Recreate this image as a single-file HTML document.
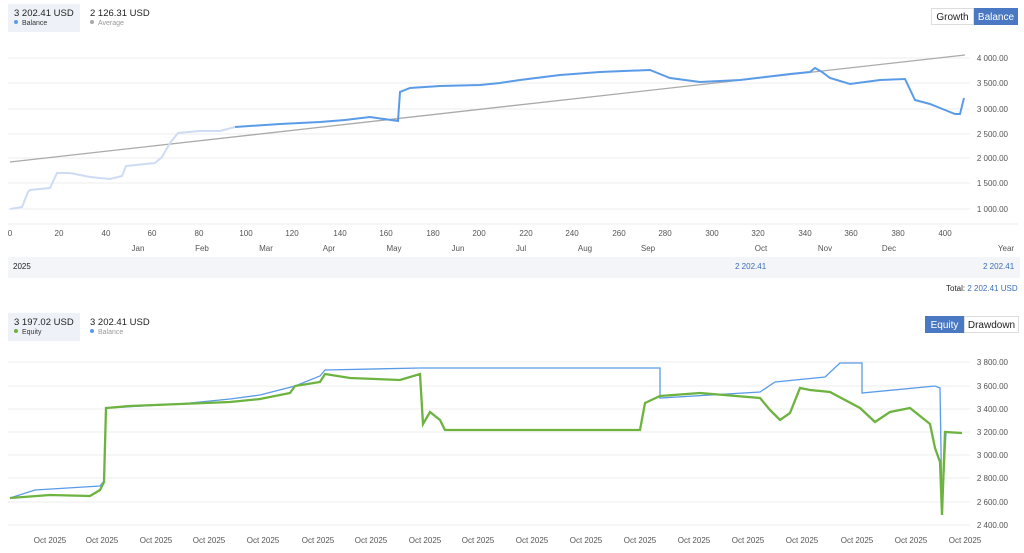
<!DOCTYPE html>
<html><head><meta charset="utf-8"><style>
body{margin:0;width:1024px;height:553px;background:#fff;font-family:"Liberation Sans","DejaVu Sans",sans-serif;position:relative;overflow:hidden;color:#333}
.a{position:absolute}
.leg{font-size:9.5px;color:#222}
.sub{font-size:7px;color:#999;margin-top:1px}
.dot{display:inline-block;width:4px;height:4px;border-radius:2px;margin-right:4px;vertical-align:1px}
.btn{position:absolute;font-size:10px;border:1px solid #ddd;height:17px;line-height:17px;text-align:center;box-sizing:border-box}
.on{background:#4a78c2;color:#fff;border-color:#4a78c2}
svg text{font-family:"Liberation Sans","DejaVu Sans",sans-serif;font-size:8px;fill:#555}
</style></head><body>
<div class="a" style="left:8px;top:4px;width:72px;height:28px;background:#eef2f8"></div>
<div class="a leg" style="left:14px;top:8px">3 202.41 USD<div class="sub" style="color:#333"><span class="dot" style="background:#5a9be8"></span>Balance</div></div>
<div class="a leg" style="left:90px;top:8px">2 126.31 USD<div class="sub"><span class="dot" style="background:#aaa"></span>Average</div></div>
<div class="btn" style="left:931px;top:8px;width:43px;color:#222">Growth</div>
<div class="btn on" style="left:974px;top:8px;width:44px">Balance</div>

<div class="a" style="left:8px;top:257px;width:1012px;height:21px;background:#f3f5f9"></div>
<div class="a" style="left:13px;top:262px;font-size:8px;color:#222">2025</div>
<div class="a" style="left:735px;top:262px;font-size:8px;color:#3b6fb8">2 202.41</div>
<div class="a" style="left:983px;top:262px;font-size:8px;color:#3b6fb8">2 202.41</div>
<div class="a" style="left:946px;top:284px;font-size:8px;color:#222">Total: <span style="color:#3b6fb8">2 202.41 USD</span></div>

<div class="a" style="left:8px;top:313px;width:72px;height:28px;background:#eef2f8"></div>
<div class="a leg" style="left:14px;top:317px">3 197.02 USD<div class="sub" style="color:#333"><span class="dot" style="background:#6db33f"></span>Equity</div></div>
<div class="a leg" style="left:90px;top:317px">3 202.41 USD<div class="sub"><span class="dot" style="background:#5a9be8"></span>Balance</div></div>
<div class="btn on" style="left:925px;top:316px;width:39px">Equity</div>
<div class="btn" style="left:964px;top:316px;width:55px;color:#222">Drawdown</div>

<svg class="a" style="left:0;top:0" width="1024" height="553">
<g stroke="#eee" stroke-width="1">
<line x1="8" x2="970" y1="58" y2="58"/><line x1="8" x2="970" y1="83" y2="83"/><line x1="8" x2="970" y1="109" y2="109"/><line x1="8" x2="970" y1="134" y2="134"/><line x1="8" x2="970" y1="158" y2="158"/><line x1="8" x2="970" y1="183" y2="183"/><line x1="8" x2="970" y1="209" y2="209"/><line x1="8" x2="1018" y1="224" y2="224"/>
<line x1="8" x2="970" y1="362" y2="362"/><line x1="8" x2="970" y1="386" y2="386"/><line x1="8" x2="970" y1="409" y2="409"/><line x1="8" x2="970" y1="432" y2="432"/><line x1="8" x2="970" y1="455" y2="455"/><line x1="8" x2="970" y1="478" y2="478"/><line x1="8" x2="970" y1="502" y2="502"/><line x1="8" x2="970" y1="525" y2="525"/>
</g>
<g text-anchor="end">
<text x="1008" y="61">4 000.00</text><text x="1008" y="86">3 500.00</text><text x="1008" y="112">3 000.00</text><text x="1008" y="137">2 500.00</text><text x="1008" y="161">2 000.00</text><text x="1008" y="186">1 500.00</text><text x="1008" y="212">1 000.00</text>
<text x="1008" y="365">3 800.00</text><text x="1008" y="389">3 600.00</text><text x="1008" y="412">3 400.00</text><text x="1008" y="435">3 200.00</text><text x="1008" y="458">3 000.00</text><text x="1008" y="481">2 800.00</text><text x="1008" y="505">2 600.00</text><text x="1008" y="528">2 400.00</text>
</g>
<g text-anchor="middle">
<text x="10" y="236">0</text><text x="59" y="236">20</text><text x="106" y="236">40</text><text x="152" y="236">60</text><text x="199" y="236">80</text><text x="246" y="236">100</text><text x="292" y="236">120</text><text x="340" y="236">140</text><text x="386" y="236">160</text><text x="433" y="236">180</text><text x="479" y="236">200</text><text x="526" y="236">220</text><text x="572" y="236">240</text><text x="619" y="236">260</text><text x="665" y="236">280</text><text x="712" y="236">300</text><text x="758" y="236">320</text><text x="805" y="236">340</text><text x="851" y="236">360</text><text x="898" y="236">380</text><text x="945" y="236">400</text>
<text x="138" y="251">Jan</text><text x="202" y="251">Feb</text><text x="266" y="251">Mar</text><text x="329" y="251">Apr</text><text x="394" y="251">May</text><text x="458" y="251">Jun</text><text x="521" y="251">Jul</text><text x="585" y="251">Aug</text><text x="648" y="251">Sep</text><text x="761" y="251">Oct</text><text x="825" y="251">Nov</text><text x="889" y="251">Dec</text><text x="1006" y="251">Year</text>
<text x="50" y="543">Oct 2025</text><text x="102" y="543">Oct 2025</text><text x="156" y="543">Oct 2025</text><text x="209" y="543">Oct 2025</text><text x="263" y="543">Oct 2025</text><text x="318" y="543">Oct 2025</text><text x="371" y="543">Oct 2025</text><text x="425" y="543">Oct 2025</text><text x="478" y="543">Oct 2025</text><text x="532" y="543">Oct 2025</text><text x="586" y="543">Oct 2025</text><text x="640" y="543">Oct 2025</text><text x="694" y="543">Oct 2025</text><text x="748" y="543">Oct 2025</text><text x="802" y="543">Oct 2025</text><text x="857" y="543">Oct 2025</text><text x="911" y="543">Oct 2025</text><text x="965" y="543">Oct 2025</text>
</g>
<line x1="10" y1="162" x2="965" y2="55" stroke="#aaa" stroke-width="1.3"/>
<polyline fill="none" stroke="#cddcf4" stroke-width="2" points="10,209 22,207 28,192 30,190 50,188 57,173 70,173 90,177 110,179 122,176 126,166 155,163 162,157 170,143 178,133 200,131 220,131 235,127"/>
<polyline fill="none" stroke="#5a9be8" stroke-width="2" points="235,127 280,124 320,122 345,120 370,117 398,121 400,92 410,88 440,86 480,85 500,83 520,80 560,75 600,72 650,70 670,78 700,82 740,80 790,74 810,72 815,68 822,72 830,78 850,84 880,80 905,79 915,100 930,104 945,110 955,114 960,114 964,98"/>
<polyline fill="none" stroke="#5a9be8" stroke-width="1.3" points="10,498 35,490 100,486 104,481 106,408 180,404 230,399 260,395 295,386 320,376 325,370 420,368 660,368 660,398 760,392 775,382 825,377 840,363 862,363 862,393 935,386 940,388 942,512 946,432 962,433"/>
<polyline fill="none" stroke="#6db33f" stroke-width="2.3" points="10,498 50,495 90,496 100,490 104,482 106,408 130,406 180,404 230,402 260,399 290,393 295,386 320,382 325,374 350,378 400,380 420,374 423,424 430,412 440,420 445,430 600,430 640,430 645,403 660,396 700,393 760,398 770,410 780,420 790,413 800,388 810,390 830,392 860,408 875,422 890,412 910,408 930,424 935,448 940,462 942,515 945,432 962,433"/>
</svg>
</body></html>
